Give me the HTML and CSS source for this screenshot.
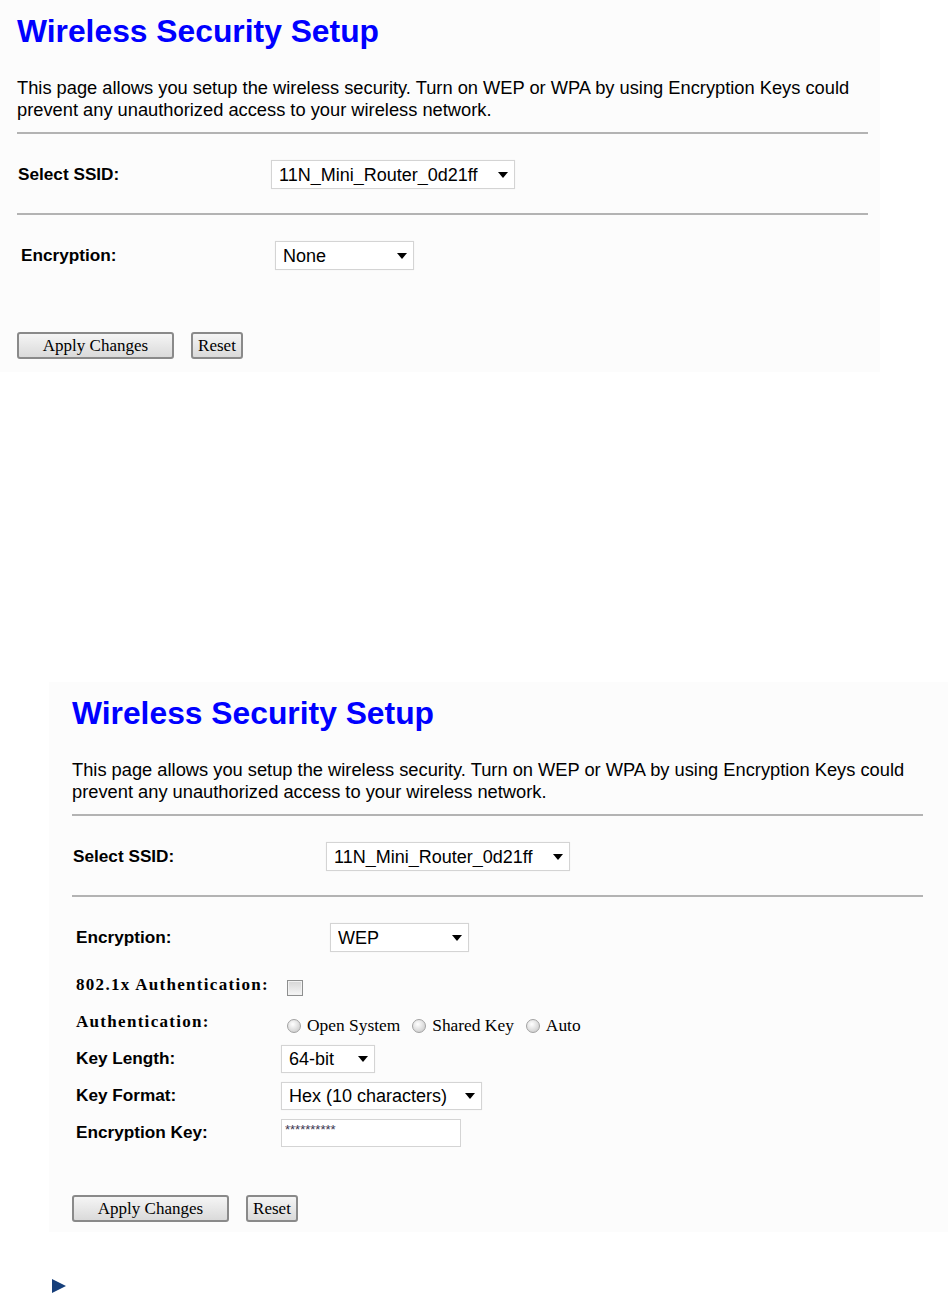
FILE: index.html
```html
<!DOCTYPE html>
<html lang="en">
<head>
    <meta charset="UTF-8">
    <title>Wireless Security Setup</title>
    <link rel="stylesheet" href="styles.css">
</head>
<body>
    <!-- Encryption: None -->
    <div class="shot shot-none">
        <div class="page">
            <h1 class="title">Wireless Security Setup</h1>
            <p class="intro">This page allows you setup the wireless security. Turn on WEP or WPA by using Encryption Keys could prevent any unauthorized access to your wireless network.</p>
            <hr class="rule">
            <div class="row col-ssid">
                <span class="label label-ssid">Select SSID:</span>
                <span class="select w-ssid"><select><option>11N_Mini_Router_0d21ff</option></select></span>
            </div>
            <hr class="rule rule-mid">
            <div class="row col-enc">
                <span class="label">Encryption:</span>
                <span class="select w-enc"><select><option>None</option></select></span>
            </div>
            <div class="buttons buttons-none">
                <button class="btn btn-apply">Apply Changes</button>
                <button class="btn btn-reset">Reset</button>
            </div>
        </div>
    </div>

    <!-- Encryption: WEP -->
    <div class="shot shot-wep">
        <div class="page">
            <h1 class="title">Wireless Security Setup</h1>
            <p class="intro">This page allows you setup the wireless security. Turn on WEP or WPA by using Encryption Keys could prevent any unauthorized access to your wireless network.</p>
            <hr class="rule">
            <div class="row col-ssid">
                <span class="label label-ssid">Select SSID:</span>
                <span class="select w-ssid"><select><option>11N_Mini_Router_0d21ff</option></select></span>
            </div>
            <hr class="rule rule-mid">
            <div class="row col-enc">
                <span class="label">Encryption:</span>
                <span class="select w-enc"><select><option>WEP</option></select></span>
            </div>
            <div class="options">
                <div class="opt-row col-wep">
                    <span class="label label-serif">802.1x Authentication:</span>
                    <input type="checkbox" class="check">
                </div>
                <div class="opt-row col-wep">
                    <span class="label label-serif">Authentication:</span>
                    <span class="radios">
                        <label class="radio-item"><input type="radio" name="auth" class="radio">Open System</label>
                        <label class="radio-item"><input type="radio" name="auth" class="radio">Shared Key</label>
                        <label class="radio-item"><input type="radio" name="auth" class="radio">Auto</label>
                    </span>
                </div>
                <div class="opt-row col-key">
                    <span class="label">Key Length:</span>
                    <span class="select select-sm w-len"><select><option>64-bit</option></select></span>
                </div>
                <div class="opt-row col-key">
                    <span class="label">Key Format:</span>
                    <span class="select select-sm w-fmt"><select><option>Hex (10 characters)</option></select></span>
                </div>
                <div class="opt-row col-key">
                    <span class="label">Encryption Key:</span>
                    <input type="text" class="field" value="**********">
                </div>
            </div>
            <div class="buttons buttons-wep">
                <button class="btn btn-apply">Apply Changes</button>
                <button class="btn btn-reset">Reset</button>
            </div>
        </div>
    </div>

    <svg class="marker" width="14" height="14" viewBox="0 0 14 14"><polygon points="0,0 14,7 0,14" fill="#173f7b"/></svg>
</body>
</html>
```

FILE: styles.css
```css
body {
    margin: 0;
    background: #fff;
    font-family: "Liberation Sans", Arial, sans-serif;
    color: #000;
}
.shot {
    background: #fcfcfc;
    box-sizing: border-box;
}
.shot-none {
    width: 880px;
    padding: 13px 12px 13px 17px;
}
.shot-wep {
    margin: 310px 0 0 49px;
    padding: 13px 25px 10px 23px;
}
.page {
    width: 851px;
}
.title {
    margin: 0;
    font-size: 31.8px;
    line-height: 36px;
    font-weight: bold;
    color: #0000ff;
}
.intro {
    margin: 28px 0 0;
    font-size: 18.3px;
    line-height: 22px;
}
.rule {
    margin: 11px 0 0;
    height: 0;
    border: 0;
    border-top: 2px solid #b3b3b3;
}
.rule-mid {
    margin-top: 24px;
}
.row {
    display: flex;
    align-items: center;
    height: 29px;
    margin-top: 26px;
}
.opt-row {
    display: flex;
    align-items: center;
    height: 37px;
}
.options {
    margin-top: 14px;
}
.label {
    flex: none;
    box-sizing: border-box;
    width: var(--col);
    padding-left: 4px;
    font-size: 17.2px;
    font-weight: bold;
}
.label-ssid {
    padding-left: 1px;
}
.label-serif {
    font-family: "Liberation Serif", "Times New Roman", serif;
    font-size: 17px;
    letter-spacing: 1.3px;
}
.col-ssid { --col: 254px; }
.col-enc { --col: 258px; }
.col-wep { --col: 215px; }
.col-key { --col: 209px; }

.select {
    position: relative;
    display: inline-block;
    box-sizing: border-box;
    height: 29px;
    border: 1px solid #d4d4d4;
    background: #fff;
    box-shadow: 0 0 1px #ececec;
}
.select-sm {
    height: 28px;
}
.select select {
    appearance: none;
    -webkit-appearance: none;
    width: 100%;
    height: 100%;
    border: 0;
    background: transparent;
    padding: 0 0 0 7px;
    font-family: "Liberation Sans", Arial, sans-serif;
    font-size: 18px;
    color: #000;
}
.select::after {
    content: "";
    position: absolute;
    right: 6px;
    top: 50%;
    margin-top: -3px;
    border-left: 5px solid transparent;
    border-right: 5px solid transparent;
    border-top: 6px solid #000;
}
.w-ssid { width: 244px; }
.w-enc { width: 139px; }
.w-len { width: 94px; }
.w-fmt { width: 201px; }

.check {
    appearance: none;
    -webkit-appearance: none;
    width: 16px;
    height: 16px;
    margin: 6px 0 0;
    border: 1px solid #8e8f8f;
    background: linear-gradient(#d6d6d6, #f6f6f6);
    box-shadow: inset 0 0 0 1px #f2f2f2;
}
.radios {
    display: flex;
    margin-top: 8px;
    font-family: "Liberation Serif", "Times New Roman", serif;
    font-size: 17.4px;
}
.radio-item {
    display: flex;
    align-items: center;
    margin-right: 12px;
}
.radio {
    appearance: none;
    -webkit-appearance: none;
    width: 14px;
    height: 14px;
    margin: 0 6px 0 0;
    border: 1px solid #a2a2a2;
    border-radius: 50%;
    background: radial-gradient(circle at 40% 35%, #ffffff, #d2d2d2 75%);
}
.field {
    box-sizing: border-box;
    width: 180px;
    height: 28px;
    margin: 0;
    border: 1px solid #d4d4d4;
    padding: 0 0 6px 3px;
    background: #fff;
    font-family: "Liberation Sans", Arial, sans-serif;
    font-size: 13px;
    color: #3a3550;
}

.buttons {
    display: flex;
    gap: 17px;
}
.buttons-none {
    margin-top: 62px;
}
.buttons-wep {
    margin-top: 44px;
}
.btn {
    height: 27px;
    padding: 0;
    border: 2px solid #8a8a8a;
    border-radius: 3px;
    background: linear-gradient(#f5f5f5, #dadada);
    font-family: "Liberation Serif", "Times New Roman", serif;
    font-size: 17px;
    color: #000;
}
.btn-apply {
    width: 157px;
}
.btn-reset {
    width: 52px;
}
.marker {
    display: block;
    margin: 47px 0 0 52px;
}
```
